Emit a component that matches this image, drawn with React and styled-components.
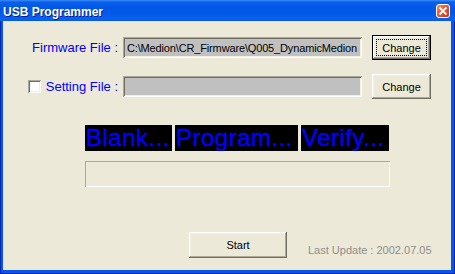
import React from 'react';
import styled, { createGlobalStyle, css } from 'styled-components';

const GlobalStyle = createGlobalStyle`
  html, body { margin: 0; padding: 0; background: #ffffff; }
  body { font-family: "Liberation Sans", Arial, sans-serif; font-size: 11px; }
  * { box-sizing: border-box; }
`;

const Window = styled.div`
  width: 455px;
  height: 274px;
  display: flex;
  flex-direction: column;
  background: #0656EC;
  box-shadow: inset 1px 0 #0026B8, inset -1px 0 #0024A8, inset 0 -1px #0024A8;
`;

const TitleBar = styled.div`
  height: 21px;
  flex: none;
  display: flex;
  align-items: flex-start;
  justify-content: space-between;
  padding: 0 5px 0 3px;
  background: linear-gradient(
    to bottom,
    #3D8DF6 0px,
    #0A5FEA 2px,
    #0256E6 8px,
    #0259E9 14px,
    #0A62F0 19px,
    #0655E6 21px
  );
`;

const Title = styled.span`
  color: #ffffff;
  font-family: "Liberation Sans", Arial, sans-serif;
  font-weight: bold;
  font-size: 12px;
  line-height: 14px;
  padding-top: 5px;
  text-shadow: 1px 1px #0A1E8C;
  white-space: nowrap;
`;

const CloseButton = styled.div`
  width: 14px;
  height: 14px;
  margin-top: 4px;
  display: flex;
`;

const Body = styled.div`
  flex: 1;
  margin: 0 4px 4px 3px;
  background: #ECE9D8;
  display: flex;
  flex-direction: column;
  padding-top: 14px;
`;

const FileRows = styled.div`
  display: flex;
  flex-direction: column;
  gap: 14px;
`;

const FileRow = styled.div`
  display: flex;
  align-items: center;
  height: 25px;
  margin-left: 17px;
`;

const LabelCell = styled.label`
  width: 98px;
  display: flex;
  justify-content: flex-end;
  align-items: center;
  gap: 5px;
  color: #0000FF;
  font-size: 13px;
  line-height: 15px;
  white-space: nowrap;
`;

const sunken = css`
  box-shadow:
    inset 1px 1px #ACA899,
    inset -1px -1px #FFFFFF,
    inset 2px 2px #716F64,
    inset -2px -2px #F1EFE2;
`;

const Checkbox = styled.span`
  width: 13px;
  height: 13px;
  background: #ffffff;
  ${sunken}
`;

const Field = styled.div`
  width: 239px;
  height: 21px;
  margin-left: 5px;
  background: #C0C0C0;
  ${sunken}
  display: flex;
  align-items: center;
  padding-left: 4px;
  font-size: 11px;
  letter-spacing: -0.15px;
  color: #000000;
  white-space: nowrap;
  overflow: hidden;
`;

const Button = styled.button`
  width: ${p => p.$w}px;
  height: ${p => p.$h}px;
  margin: 0 0 0 ${p => p.$ml || 0}px;
  padding: 0;
  background: #ECE9D8;
  font-family: "Liberation Sans", Arial, sans-serif;
  font-size: 11px;
  color: #000000;
  display: flex;
  align-items: stretch;
  justify-content: stretch;
  border: ${p => (p.$default ? '1px solid #000000' : 'none')};
  box-shadow:
    inset -1px -1px #716F64,
    inset 1px 1px #FFFFFF,
    inset -2px -2px #ACA899,
    inset 2px 2px #F1EFE2;
`;

const ButtonFace = styled.span`
  flex: 1;
  display: flex;
  align-items: center;
  justify-content: center;
  margin: 3px;
  border: 1px dotted ${p => (p.$focus ? '#000000' : 'transparent')};
`;

const StatusRow = styled.div`
  display: flex;
  gap: 3px;
  margin: 26px 0 0 82px;
`;

const StatusBox = styled.div`
  width: ${p => p.$w}px;
  height: 26px;
  background: #000000;
  color: #0000FF;
  font-family: "Liberation Sans", Arial, sans-serif;
  font-size: 24px;
  letter-spacing: 0.5px;
  line-height: 26px;
  -webkit-text-stroke: 0.3px #0000FF;
  padding-left: 1px;
  white-space: nowrap;
  overflow: hidden;
`;

const Progress = styled.div`
  width: 305px;
  height: 26px;
  margin: 10px 0 0 82px;
  background: #ECE9D8;
  box-shadow: inset 1px 1px #ACA899, inset -1px -1px #FFFFFF;
`;

const BottomRow = styled.div`
  display: flex;
  align-items: flex-end;
  gap: 21px;
  margin: 45px 0 0 186px;
`;

const UpdateText = styled.span`
  color: #8E8E8E;
  font-size: 11px;
  line-height: 13px;
  margin-bottom: 1px;
  white-space: nowrap;
`;

const CloseIcon = () => (
  <svg width="14" height="14" viewBox="0 0 14 14">
    <defs>
      <linearGradient id="closeGrad" x1="0" y1="0" x2="1" y2="1">
        <stop offset="0" stopColor="#F29A80" />
        <stop offset="0.45" stopColor="#E25A33" />
        <stop offset="1" stopColor="#C2380F" />
      </linearGradient>
    </defs>
    <rect x="0.5" y="0.5" width="13" height="13" rx="2.5" fill="url(#closeGrad)" stroke="#FFFFFF" />
    <path d="M4.2 4.2 L9.8 9.8 M9.8 4.2 L4.2 9.8" stroke="#FFFFFF" strokeWidth="1.9" strokeLinecap="square" />
  </svg>
);

export default function App() {
  return (
    <>
      <GlobalStyle />
      <Window>
        <TitleBar>
          <Title>USB Programmer</Title>
          <CloseButton><CloseIcon /></CloseButton>
        </TitleBar>
        <Body>
          <FileRows>
            <FileRow>
              <LabelCell>Firmware File :</LabelCell>
              <Field>C:\Medion\CR_Firmware\Q005_DynamicMedion</Field>
              <Button $w={59} $h={25} $ml={10} $default>
                <ButtonFace $focus>Change</ButtonFace>
              </Button>
            </FileRow>
            <FileRow>
              <LabelCell>
                <Checkbox />
                Setting File :
              </LabelCell>
              <Field />
              <Button $w={59} $h={25} $ml={10}>
                <ButtonFace>Change</ButtonFace>
              </Button>
            </FileRow>
          </FileRows>
          <StatusRow>
            <StatusBox $w={87}>Blank...</StatusBox>
            <StatusBox $w={123}>Program...</StatusBox>
            <StatusBox $w={88}>Verify...</StatusBox>
          </StatusRow>
          <Progress />
          <BottomRow>
            <Button $w={98} $h={26}>
              <ButtonFace>Start</ButtonFace>
            </Button>
            <UpdateText>Last Update : 2002.07.05</UpdateText>
          </BottomRow>
        </Body>
      </Window>
    </>
  );
}
